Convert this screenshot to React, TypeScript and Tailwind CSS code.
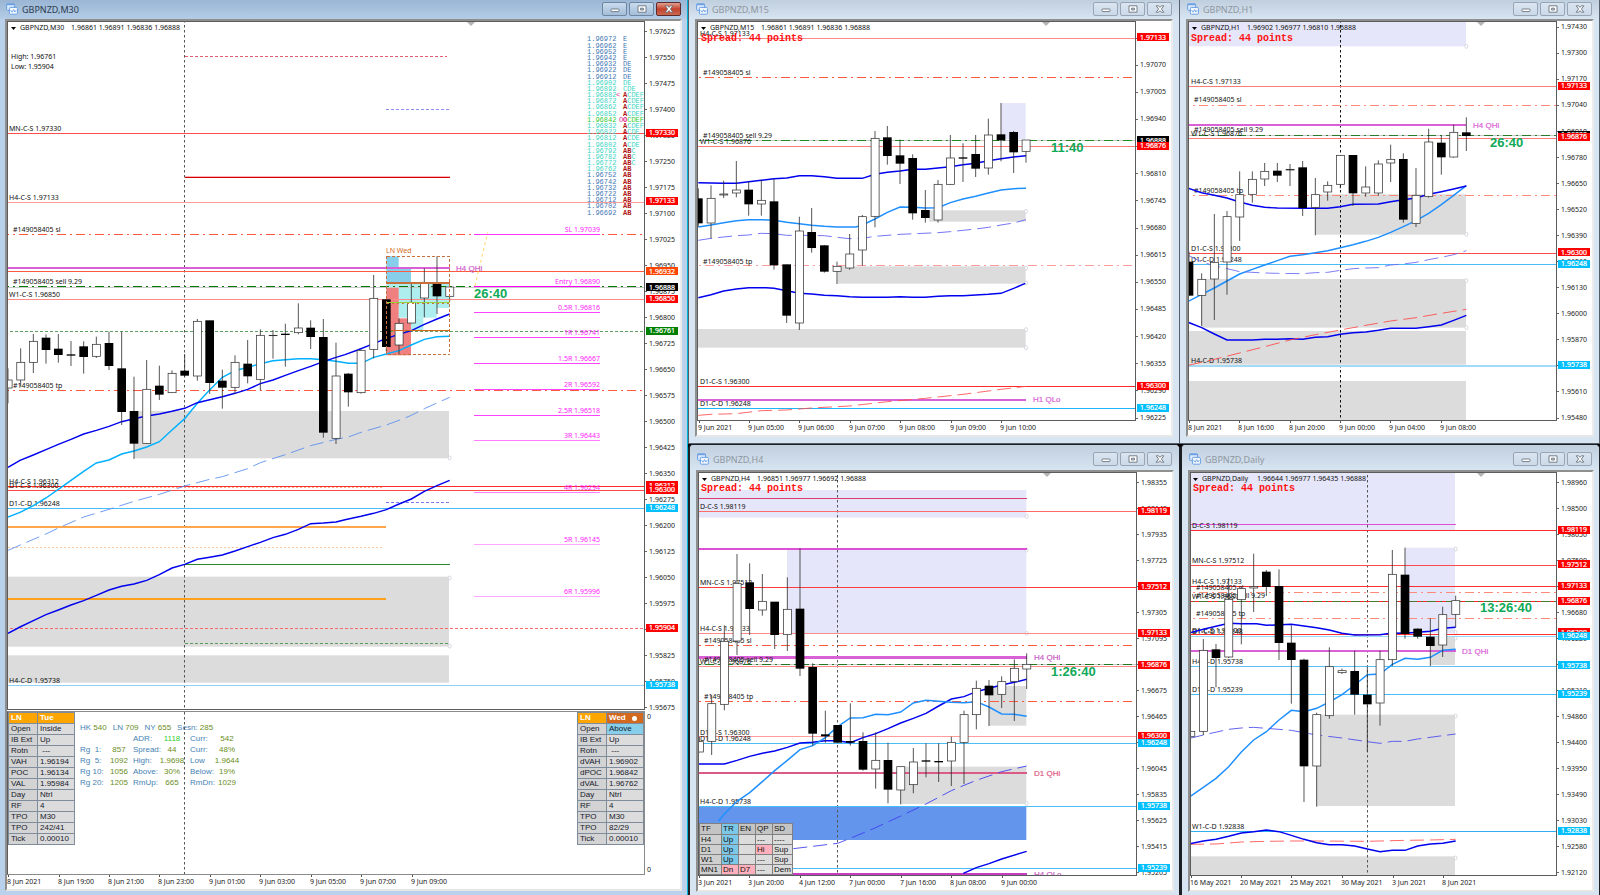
import React from "react";

const px = (v: number) => Math.round(v / 3);
const mid = (v: number) => Math.round(v / 3 + 2.4);

type Candle = [x: number, high: number, low: number, top: number, bottom: number, bear: 0 | 1];
type Line = { y: number; c: string; x1?: number; x2?: number; w?: number; dash?: "dd" | "d" | "dot" };
type Box = [x1: number, y1: number, x2: number, y2: number, fill: string];
type Curve = { c: string; p: string; w?: number; dash?: string };
type Label = { x: number; y: number; t: string; c?: string; k?: "time" | "mark" | "spread" };
type Badge = [y: number, text: string, fill: string];

type ChartData = {
  ox: number;
  oy: number;
  symbol: string;
  titleX: number;
  titleY: number;
  ohlcX: number;
  ohlc: string;
  shiftX: number;
  boxes: Box[];
  candles: Candle[];
  lines: Line[];
  curves: Curve[];
  labels: Label[];
  marks: Label[];
  handles?: [number, number][];
  separator?: number;
  separatorColor?: string;
  prices: [y: number, text: string][];
  badges: Badge[];
  times: [x: number, text: string][];
};

const RED = "#ff0000";
const SKY = "#00bfff";
const BLUE = "#0000ee";
const DODGER = "#1e8fff";
const GREY = "#dcdcdc";
const LAV = "#e6e6fa";
const ORCHID = "#da60d6";
const TOMATO = "#ff5a40";
const DD_RED = "#ff8a7a";

const DASHES = { dd: "9 4 2 4", d: "3 2", dot: "2 2" };

const scale = (first: number, step: number, y0: number, dy: number, n: number): [number, string][] =>
  Array.from({ length: n }, (_, i) => [y0 + dy * i, ((first - step * i) / 100000).toFixed(5)]);

const NOTO = "font-['Noto_Sans',sans-serif]";
const SANS = "font-['Liberation_Sans',Arial,sans-serif]";
const MONO = "font-['Liberation_Mono',monospace]";

/* ---------- chart data ---------- */

const rungs: [number, string, string][] = [
  [703, "SL 1.97039", "#ff33ff"],
  [859, "Entry 1.96890", "#ff00ff"],
  [937, "0.5R 1.96816", "#ff44ff"],
  [1012, "1R 1.96741", "#ff44ff"],
  [1090, "1.5R 1.96667", "#ff44ff"],
  [1168, "2R 1.96592", "#ff44ff"],
  [1246, "2.5R 1.96518", "#ff44ff"],
  [1321, "3R 1.96443", "#ff7dff"],
  [1477, "4R 1.96294", "#ff7dff"],
  [1632, "5R 1.96145", "#ffa6ff"],
  [1788, "6R 1.95996", "#ffa6ff"],
];

const m30: ChartData = {
  ox: 24, oy: 66, symbol: "GBPNZD,M30", titleX: 60, titleY: 84, ohlcX: 213,
  ohlc: "1.96861 1.96891 1.96836 1.96888", shiftX: 1414,
  boxes: [
    [402, 1233, 1347, 1375, GREY], [22, 1730, 1347, 1940, GREY], [22, 1966, 1347, 2048, GREY],
    [1159, 769, 1196, 808, "#87ceeb"], [1159, 806, 1233, 847, "#87ceeb"],
    [1159, 847, 1348, 924, "#afeeee"], [1196, 924, 1310, 953, "#afeeee"], [1233, 953, 1270, 990, "#afeeee"],
    [1159, 862, 1196, 957, "#f08080"], [1159, 955, 1233, 1066, "#f08080"],
  ],
  candles: [
    [24, 1105, 1210, 1140, 1165, 0], [62, 1045, 1160, 1087, 1141, 0], [100, 1002, 1119, 1024, 1088, 0],
    [138, 1003, 1091, 1014, 1050, 1], [175, 1002, 1088, 1047, 1065, 1], [213, 1023, 1098, 1064, 1067, 1],
    [251, 1024, 1121, 1040, 1071, 1], [289, 1010, 1074, 1033, 1070, 0], [327, 995, 1110, 1030, 1098, 1],
    [365, 995, 1275, 1106, 1236, 1], [402, 1130, 1377, 1234, 1331, 1], [440, 1080, 1331, 1168, 1331, 0],
    [478, 1097, 1200, 1158, 1184, 1], [516, 1111, 1179, 1120, 1179, 0], [554, 1062, 1131, 1113, 1127, 1],
    [592, 957, 1142, 964, 1129, 0], [629, 962, 1182, 962, 1149, 1], [667, 1109, 1226, 1143, 1163, 1],
    [705, 1066, 1182, 1087, 1163, 0], [743, 1020, 1150, 1092, 1129, 1], [781, 988, 1171, 1006, 1139, 0],
    [819, 990, 1076, 1006, 1008, 0], [856, 971, 1100, 1002, 1005, 1], [895, 910, 1003, 984, 999, 0],
    [932, 961, 1047, 984, 1011, 1], [970, 957, 1313, 1012, 1298, 1], [1008, 1028, 1332, 1128, 1316, 0],
    [1045, 1119, 1220, 1122, 1177, 1], [1083, 1048, 1181, 1051, 1179, 0], [1121, 825, 1075, 895, 1049, 0],
    [1159, 899, 1055, 899, 1041, 1], [1197, 955, 1065, 970, 1036, 0], [1234, 846, 970, 907, 970, 0],
    [1273, 805, 952, 847, 895, 0], [1311, 769, 942, 847, 889, 1], [1349, 861, 905, 861, 890, 0],
  ],
  lines: [
    { y: 170, c: "#e06070", x1: 554, x2: 1341, dash: "d" },
    { y: 327, c: "#8c8cf5", x1: 1159, x2: 1349, dash: "d" },
    { y: 400, c: "#ff4d4d" },
    { y: 529, c: "#ffb0b0", x1: 554, x2: 1349 },
    { y: 532, c: "#cc0000", x1: 554, x2: 1349 },
    { y: 606, c: "#ff9c9c" },
    { y: 703, c: TOMATO, dash: "dd" },
    { y: 804, c: ORCHID, x2: 1349, w: 2 },
    { y: 814, c: TOMATO },
    { y: 862, c: "#c8c8c8" },
    { y: 859, c: "#007a00", dash: "dd" },
    { y: 898, c: "#ff8a8a" },
    { y: 994, c: "#5f9f5f", dash: "d" },
    { y: 1171, c: TOMATO, dash: "dd" },
    { y: 1459, c: "#ff2a2a" },
    { y: 1462, c: "#ffb080", x2: 1152, dash: "dot" },
    { y: 1471, c: "#ff4a4a" },
    { y: 1525, c: "#48bdf8" },
    { y: 1581, c: "#ffa64d", x2: 1159, w: 2 },
    { y: 1643, c: "#ffc9a0", x2: 1152, dash: "dot" },
    { y: 1694, c: "#2a8a2a", x1: 554, x2: 1349 },
    { y: 1798, c: "#ffa01a", x2: 1159, w: 2 },
    { y: 1885, c: "#f56a6a", dash: "d" },
    { y: 1930, c: "#5a9a5a", x1: 554, x2: 1343, dash: "d" },
    { y: 2056, c: "#8fd0f8" },
    { y: 1507, c: "#7a7af0", x1: 1159, x2: 1349, dash: "d" },
    ...rungs.map(([y, , c]) => ({ y, c, x1: 1423, x2: 1799 })),
  ],
  curves: [
    { c: "#00b0ff", p: "24,1551 60,1537 100,1517 138,1494 175,1468 213,1441 251,1414 289,1389 327,1380 365,1362 402,1353 440,1341 478,1325 516,1290 554,1256 592,1210 629,1170 667,1132 705,1112 743,1102 781,1091 819,1082 856,1079 895,1076 932,1076 970,1079 1008,1084 1045,1090 1083,1090 1121,1072 1159,1062 1197,1052 1234,1035 1273,1018 1311,1010 1349,1009" },
    { c: BLUE, p: "24,1402 60,1381 100,1365 138,1349 175,1333 213,1318 251,1302 289,1291 327,1279 365,1265 402,1256 440,1248 478,1242 516,1234 554,1225 592,1208 629,1199 667,1190 705,1180 743,1168 781,1151 819,1140 856,1126 895,1112 932,1099 970,1085 1008,1072 1035,1064 1073,1050 1121,1031 1159,1015 1197,1003 1234,992 1273,973 1311,957 1349,942" },
    { c: "#5a8df0", w: 1, dash: "14 6", p: "24,1651 100,1618 138,1602 175,1584 251,1551 327,1528 402,1504 478,1483 554,1458 629,1438 667,1430 743,1406 781,1388 856,1364 932,1337 1008,1318 1045,1311 1083,1297 1159,1275 1197,1261 1234,1246 1273,1226 1311,1209 1349,1192" },
    { c: BLUE, p: "24,1900 60,1881 100,1862 138,1844 175,1830 213,1815 251,1802 289,1786 327,1770 365,1759 402,1752 440,1741 478,1724 516,1704 554,1693 592,1678 629,1672 667,1665 705,1653 743,1640 781,1627 819,1613 856,1603 895,1588 932,1571 970,1569 1008,1566 1035,1559 1083,1549 1121,1540 1159,1529 1197,1512 1234,1497 1273,1474 1311,1457 1349,1441" },
    { c: "#ffd24a", w: 1, dash: "3 3", p: "1425,858 1463,697" },
  ],
  labels: [
    { x: 34, y: 171, t: "High: 1.96761" }, { x: 33, y: 200, t: "Low: 1.95904" },
    { x: 28, y: 386, t: "MN-C-S 1.97330" }, { x: 28, y: 592, t: "H4-C-S 1.97133" },
    { x: 39, y: 689, t: "#149058405 sl" }, { x: 39, y: 845, t: "#149058405 sell 9.29" },
    { x: 28, y: 885, t: "W1-C-S 1.96850" }, { x: 39, y: 1157, t: "#149058405 tp" },
    { x: 28, y: 1445, t: "H4-C-S 1.96312" }, { x: 28, y: 1458, t: "D1-C-S 1.96300" },
    { x: 28, y: 1511, t: "D1-C-D 1.96248" }, { x: 28, y: 2043, t: "H4-C-D 1.95738" },
  ],
  marks: [
    { x: 1158, y: 751, t: "LN Wed", c: "#d2691e" },
    { x: 1368, y: 804, t: "H4 QHi", c: "#d060cc", k: "mark" },
    { x: 1424, y: 882, t: "26:40", k: "time" },
  ],
  handles: [[1349, 1374], [1349, 1734], [1349, 1938]],
  separator: 554,
  prices: scale(197625, 75, 94, 78, 27),
  badges: [
    [399, "1.97330", RED], [603, "1.97133", RED], [814, "1.96932", "#ff4500"], [896, "1.96850", RED],
    [862, "1.96888", "#000000"], [992, "1.96761", "#008000"], [1456, "1.96312", RED], [1470, "1.96300", RED],
    [1524, "1.96248", SKY], [1883, "1.95904", RED], [2055, "1.95738", SKY],
  ],
  times: [[24, "8 Jun 2021"], [176, "8 Jun 19:00"], [327, "8 Jun 21:00"], [478, "8 Jun 23:00"], [630, "9 Jun 01:00"], [781, "9 Jun 03:00"], [933, "9 Jun 05:00"], [1084, "9 Jun 07:00"], [1235, "9 Jun 09:00"]],
};

const m15: ChartData = {
  ox: 36, oy: 66, symbol: "GBPNZD,M15", titleX: 72, titleY: 84, ohlcX: 226,
  ohlc: "1.96861 1.96891 1.96836 1.96888", shiftX: 1081,
  boxes: [
    [945, 309, 1019, 418, LAV], [730, 631, 1019, 665, GREY], [455, 799, 1019, 851, GREY], [36, 987, 1019, 1043, GREY],
  ],
  candles: [
    [37, 565, 680, 596, 670, 1], [75, 556, 715, 595, 670, 0], [113, 542, 594, 582, 586, 0], [151, 483, 592, 570, 580, 0],
    [188, 545, 647, 570, 613, 1], [226, 540, 647, 601, 613, 0], [264, 536, 809, 605, 796, 1], [302, 794, 969, 794, 947, 1],
    [340, 650, 990, 693, 970, 0], [377, 624, 758, 697, 744, 1], [415, 735, 818, 737, 815, 1], [453, 785, 852, 799, 815, 0],
    [491, 702, 809, 762, 805, 0], [529, 645, 797, 650, 751, 0], [567, 393, 682, 415, 650, 0], [604, 378, 494, 413, 468, 1],
    [642, 419, 552, 467, 491, 1], [680, 463, 659, 475, 640, 1], [718, 570, 668, 631, 654, 1], [756, 540, 668, 553, 661, 0],
    [793, 405, 555, 474, 554, 0], [831, 430, 546, 473, 476, 1], [869, 405, 531, 463, 506, 1], [907, 356, 524, 405, 505, 0],
    [945, 309, 484, 404, 421, 1], [983, 393, 519, 397, 457, 1], [1020, 420, 488, 420, 455, 0],
  ],
  lines: [
    { y: 115, c: "#ff8a8a" }, { y: 232, c: TOMATO, dash: "dd" }, { y: 421, c: "#c8c8c8" },
    { y: 421, c: "#1f8a1f", dash: "dd" }, { y: 438, c: "#ff7a7a" }, { y: 797, c: "#ff9d9d", dash: "dd" },
    { y: 1159, c: "#ff2a2a" }, { y: 1200, c: ORCHID, x2: 1020, w: 2 }, { y: 1225, c: "#1fb4fa" },
  ],
  curves: [
    { c: BLUE, p: "37,548 113,550 151,550 226,541 264,536 302,534 340,527 377,527 415,530 453,535 529,535 567,523 604,517 642,513 680,508 718,508 756,504 793,500 831,494 869,490 907,482 945,476 983,471 1020,467" },
    { c: DODGER, p: "37,681 75,675 113,668 151,662 188,659 226,659 264,661 302,667 340,671 377,676 415,679 453,681 510,681 529,675 567,657 604,637 642,621 680,622 718,624 756,623 793,608 831,597 869,589 907,579 945,570 983,566 1020,565" },
    { c: "#5f5ff5", w: 1, dash: "14 6", p: "37,721 75,715 113,711 151,707 188,705 226,700 264,701 302,706 340,706 415,707 453,712 491,716 529,715 567,709 642,703 756,698 793,695 869,687 907,682 945,675 983,669 1020,659" },
    { c: BLUE, p: "37,893 75,884 113,873 151,867 188,863 240,863 264,865 302,872 340,880 377,882 415,886 453,887 491,890 529,892 604,892 642,890 680,892 718,892 756,889 793,887 831,887 869,885 907,883 945,880 983,865 1018,850" },
    { c: "#ff5050", w: 1, dash: "14 6", p: "37,1246 75,1243 151,1241 226,1232 302,1230 377,1224 491,1218 604,1205 718,1195 831,1183 945,1168 1020,1159" },
  ],
  labels: [
    { x: 41, y: 101, t: "H4-C-S 1.97133" }, { x: 52, y: 219, t: "#149058405 sl" }, { x: 52, y: 407, t: "#149058405 sell 9.29" },
    { x: 41, y: 425, t: "W1-C-S 1.96876" }, { x: 52, y: 785, t: "#149058405 tp" }, { x: 41, y: 1145, t: "D1-C-S 1.96300" },
    { x: 41, y: 1211, t: "D1-C-D 1.96248" }, { x: 44, y: 113, t: "Spread: 44 points", k: "spread" },
  ],
  marks: [{ x: 1041, y: 1198, t: "H1 QLo", c: ORCHID, k: "mark" }, { x: 1098, y: 443, t: "11:40", k: "time" }],
  handles: [[1020, 634], [1020, 804], [1020, 849], [1020, 989], [1020, 1043]],
  prices: scale(197135, 65, 113, 81.4, 15),
  badges: [[112, "1.97133", RED], [421, "1.96888", "#000000"], [437, "1.96876", RED], [1157, "1.96300", RED], [1224, "1.96248", SKY]],
  times: [[38, "9 Jun 2021"], [188, "9 Jun 05:00"], [340, "9 Jun 06:00"], [491, "9 Jun 07:00"], [643, "9 Jun 08:00"], [794, "9 Jun 09:00"], [945, "9 Jun 10:00"]],
};

const h1: ChartData = {
  ox: 27, oy: 66, symbol: "GBPNZD,H1", titleX: 62, titleY: 84, ohlcX: 202,
  ohlc: "1.96902 1.96977 1.96810 1.96888", shiftX: 904,
  boxes: [
    [25, 66, 858, 139, LAV], [406, 583, 858, 704, GREY], [65, 837, 858, 983, GREY], [25, 993, 858, 1094, GREY], [25, 1143, 858, 1262, GREY],
  ],
  candles: [
    [27, 755, 887, 786, 887, 1], [65, 820, 978, 838, 887, 0], [103, 642, 960, 787, 838, 0], [141, 633, 884, 650, 787, 0],
    [179, 514, 723, 584, 652, 0], [217, 514, 608, 538, 584, 0], [254, 489, 558, 514, 538, 0], [292, 489, 546, 513, 527, 1],
    [330, 492, 558, 508, 511, 0], [368, 483, 648, 503, 624, 1], [406, 534, 706, 584, 623, 0], [443, 544, 602, 556, 577, 0],
    [481, 466, 565, 466, 554, 0], [519, 466, 618, 466, 580, 1], [557, 499, 590, 561, 580, 0], [595, 481, 587, 492, 580, 0],
    [632, 434, 546, 478, 490, 0], [670, 460, 668, 478, 659, 1], [708, 504, 681, 586, 671, 0], [746, 386, 593, 426, 590, 0],
    [784, 406, 524, 429, 472, 1], [821, 374, 473, 397, 472, 0], [859, 352, 453, 398, 408, 1],
  ],
  lines: [
    { y: 259, c: "#ff7a7a" }, { y: 316, c: DD_RED, dash: "dd" }, { y: 375, c: ORCHID, x2: 859, w: 2 },
    { y: 406, c: "#c8c8c8" }, { y: 406, c: "#2c7a2c", dash: "dd" }, { y: 415, c: "#ff7a7a" },
    { y: 586, c: DD_RED, dash: "dd" }, { y: 760, c: "#ff4a4a" }, { y: 793, c: "#48bdf8" }, { y: 1097, c: "#a4daf8", w: 2 },
  ],
  curves: [
    { c: DODGER, p: "25,904 65,883 103,864 141,843 179,822 217,808 254,795 292,782 330,769 368,764 406,758 443,752 481,743 519,734 557,724 595,712 632,697 670,680 708,662 746,640 784,614 821,586 859,557" },
    { c: BLUE, p: "25,565 65,578 103,586 141,594 179,606 217,616 254,622 292,624 368,625 443,625 481,620 519,613 595,612 632,605 670,599 708,594 746,583 784,575 821,567 859,558" },
    { c: "#6a6af5", w: 1, dash: "14 6", p: "25,766 65,786 103,797 141,806 179,815 254,819 292,820 368,821 406,818 443,817 481,811 519,806 557,804 595,803 632,795 670,792 708,787 746,779 784,772 821,764 859,752" },
    { c: BLUE, p: "25,967 65,983 103,1002 141,1020 217,1020 254,1018 292,1018 330,1016 368,1018 406,1012 443,1010 481,1003 519,998 557,996 595,991 632,985 708,985 746,980 784,975 821,961 859,946" },
    { c: "#ff4a4a", w: 1, dash: "14 6", p: "25,1096 103,1078 179,1059 254,1040 330,1020 406,1004 481,990 557,976 632,963 708,953 784,940 859,928" },
  ],
  labels: [
    { x: 32, y: 244, t: "H4-C-S 1.97133" }, { x: 42, y: 300, t: "#149058405 sl" }, { x: 42, y: 390, t: "#149058405 sell 9.29" },
    { x: 32, y: 400, t: "W1-C-S 1.96876" }, { x: 42, y: 573, t: "#149058405 tp" }, { x: 32, y: 746, t: "D1-C-S 1.96300" },
    { x: 32, y: 779, t: "D1-C-D 1.96248" }, { x: 32, y: 1083, t: "H4-C-D 1.95738" }, { x: 34, y: 113, t: "Spread: 44 points", k: "spread" },
  ],
  marks: [{ x: 880, y: 374, t: "H4 QHi", c: ORCHID, k: "mark" }, { x: 934, y: 430, t: "26:40", k: "time" }],
  handles: [[859, 139], [859, 703], [859, 842], [859, 983]],
  separator: 481, separatorColor: "#111111",
  prices: scale(197430, 130, 81, 78.1, 16),
  badges: [[257, "1.97133", RED], [404, "1.96888", "#000000"], [411, "1.96876", RED], [757, "1.96300", RED], [791, "1.96248", SKY], [1095, "1.95738", SKY]],
  times: [[28, "8 Jun 2021"], [178, "8 Jun 16:00"], [329, "8 Jun 20:00"], [481, "9 Jun 00:00"], [631, "9 Jun 04:00"], [784, "9 Jun 08:00"]],
};

const h4: ChartData = {
  ox: 39, oy: 99, symbol: "GBPNZD,H4", titleX: 74, titleY: 116, ohlcX: 214,
  ohlc: "1.96851 1.96977 1.96692 1.96888", shiftX: 1084,
  boxes: [
    [38, 150, 1021, 233, LAV], [303, 327, 1021, 581, LAV], [909, 738, 1021, 857, GREY], [645, 980, 1021, 1092, GREY], [38, 1100, 1021, 1200, "#6495ed"],
  ],
  candles: [
    [40, 890, 937, 905, 937, 0], [77, 765, 945, 791, 905, 0], [115, 556, 811, 604, 794, 0], [153, 342, 645, 430, 604, 0],
    [191, 370, 585, 428, 507, 1], [229, 402, 527, 484, 511, 0], [266, 486, 627, 486, 585, 1], [304, 412, 633, 508, 584, 0],
    [342, 325, 708, 507, 686, 1], [380, 670, 917, 682, 881, 1], [418, 812, 908, 884, 889, 1], [455, 856, 908, 856, 908, 1],
    [493, 790, 917, 904, 908, 1], [531, 877, 992, 904, 989, 1], [569, 877, 1046, 961, 988, 0], [606, 908, 1090, 961, 1049, 1],
    [644, 980, 1093, 980, 1051, 0], [682, 924, 1060, 966, 1035, 0], [720, 910, 1012, 962, 965, 1], [758, 910, 1026, 964, 967, 1],
    [796, 890, 1038, 907, 964, 0], [834, 812, 1032, 824, 908, 0], [871, 722, 868, 745, 825, 0], [909, 720, 858, 738, 766, 1],
    [947, 709, 804, 725, 764, 0], [985, 658, 843, 685, 725, 0], [1022, 640, 747, 673, 688, 0],
  ],
  lines: [
    { y: 176, c: "#dc3c6c", x2: 1023 }, { y: 214, c: "#ff6a6a" }, { y: 327, c: "#dd50d6", x2: 1022, w: 2 }, { y: 442, c: "#ff3c3c" },
    { y: 580, c: "#ff8a8a" }, { y: 616, c: TOMATO, dash: "dd" }, { y: 652, c: ORCHID, x2: 1023, w: 3 }, { y: 673, c: "#c8c8c8" },
    { y: 673, c: "#1f7a1f", dash: "dd" }, { y: 679, c: "#ff8a8a" }, { y: 785, c: TOMATO, dash: "dd" }, { y: 890, c: "#ff9c9c" },
    { y: 910, c: "#48bdf8" }, { y: 1000, c: "#db5a86", x2: 1023, w: 2 }, { y: 1099, c: "#48bdf8" }, { y: 1285, c: "#48bdf8" },
    { y: 1303, c: "#c83cc4", x1: 320, x2: 1023, w: 2 },
  ],
  curves: [
    { c: BLUE, p: "38,972 115,972 153,961 191,949 229,940 266,933 304,922 342,909 380,907 418,902 455,902 493,908 531,893 569,881 606,866 644,849 682,835 720,820 758,798 796,777 834,770 871,755 909,745 947,735 985,727 1022,718" },
    { c: DODGER, p: "98,1143 115,1122 153,1084 191,1058 229,1025 266,992 304,961 342,929 380,917 418,893 455,860 493,834 531,833 569,823 606,824 644,816 682,789 720,781 758,784 796,787 834,788 871,785 909,801 947,822 985,823 1022,829" },
    { c: "#3c3cf0", w: 1, dash: "14 6", p: "322,1226 380,1219 455,1210 493,1195 569,1163 644,1128 720,1092 796,1052 834,1036 871,1021 909,1008 947,995 1022,978" },
    { c: BLUE, p: "832,1300 871,1283 909,1271 947,1257 1022,1234" },
  ],
  labels: [
    { x: 43, y: 201, t: "D-C-S 1.98119" }, { x: 43, y: 428, t: "MN-C-S 1.97512" }, { x: 43, y: 567, t: "H4-C-S 1.97133" },
    { x: 54, y: 603, t: "#149058405 sl" }, { x: 54, y: 660, t: "#149058405 sell 9.29" }, { x: 43, y: 665, t: "W1-C-S 1.96876" },
    { x: 54, y: 771, t: "#149058405 tp" }, { x: 43, y: 877, t: "D1-C-S 1.96300" }, { x: 43, y: 896, t: "D1-C-D 1.96248" },
    { x: 43, y: 1085, t: "H4-C-D 1.95738" }, { x: 46, y: 145, t: "Spread: 44 points", k: "spread" },
  ],
  marks: [
    { x: 1043, y: 651, t: "H4 QHi", c: "#c85ac4", k: "mark" }, { x: 1043, y: 999, t: "D1 QHi", c: "#dc5a86", k: "mark" },
    { x: 1043, y: 1301, t: "H4 QLo", c: "#c85ac4", k: "mark" }, { x: 1099, y: 695, t: "1:26:40", k: "time" },
  ],
  handles: [[1022, 229], [1022, 330], [1022, 580], [1022, 1090]],
  separator: 455,
  prices: scale(198355, 210, 127, 78, 16),
  badges: [[213, "1.98119", RED], [439, "1.97512", RED], [578, "1.97133", RED], [675, "1.96876", RED], [887, "1.96300", RED], [908, "1.96248", SKY], [1097, "1.95738", SKY], [1283, "1.95239", SKY]],
  times: [[40, "3 Jun 2021"], [190, "3 Jun 20:00"], [342, "4 Jun 12:00"], [493, "7 Jun 00:00"], [644, "7 Jun 16:00"], [796, "8 Jun 08:00"], [947, "9 Jun 00:00"]],
};

const d1: ChartData = {
  ox: 33, oy: 99, symbol: "GBPNZD,Daily", titleX: 66, titleY: 116, ohlcX: 230,
  ohlc: "1.96644 1.96977 1.96435 1.96888", shiftX: 904,
  boxes: [
    [30, 98, 825, 271, LAV], [675, 323, 825, 580, LAV], [751, 591, 825, 675, GREY], [410, 824, 825, 1098, GREY], [30, 1249, 825, 1308, GREY],
  ],
  candles: [
    [32, 872, 892, 874, 890, 0], [70, 597, 885, 631, 875, 0], [108, 612, 742, 629, 654, 1], [146, 415, 654, 478, 652, 0],
    [184, 440, 613, 446, 480, 0], [221, 341, 516, 440, 445, 0], [259, 390, 468, 396, 441, 1], [297, 388, 660, 439, 609, 1],
    [334, 556, 791, 609, 660, 1], [372, 656, 1086, 660, 979, 1], [410, 818, 1100, 824, 979, 0], [448, 622, 836, 680, 828, 0],
    [486, 686, 702, 692, 699, 0], [524, 632, 824, 694, 764, 1], [562, 680, 935, 765, 793, 1], [600, 632, 857, 659, 790, 0],
    [637, 330, 678, 403, 660, 0], [675, 323, 596, 405, 582, 1], [713, 565, 596, 567, 590, 1], [751, 535, 678, 591, 618, 1],
    [788, 500, 651, 524, 616, 0], [827, 467, 562, 482, 524, 0],
  ],
  lines: [
    { y: 254, c: "#dd50d6", x2: 827 }, { y: 271, c: "#ff2a2a" }, { y: 376, c: "#ff4a4a" }, { y: 439, c: "#ff3030" },
    { y: 457, c: DD_RED, dash: "dd" }, { y: 484, c: "#ff2a2a" }, { y: 483, c: "#4a7a30", dash: "dd" }, { y: 534, c: DD_RED, dash: "dd" },
    { y: 583, c: "#ff3030" }, { y: 590, c: "#9cd8fa" }, { y: 633, c: ORCHID, x2: 827, w: 2 }, { y: 679, c: "#58c0f4" },
    { y: 763, c: "#48bdf8" }, { y: 1174, c: "#30aef0" },
  ],
  curves: [
    { c: BLUE, p: "30,578 70,568 108,559 146,550 184,551 230,551 259,556 334,553 372,558 410,563 448,570 486,580 524,585 600,584 637,579 675,580 713,577 751,574 788,565 827,562" },
    { c: DODGER, p: "30,1070 70,1042 108,1015 146,980 184,936 221,900 259,875 297,840 334,811 372,815 410,805 448,786 486,764 524,735 562,704 600,702 637,673 675,655 713,658 751,652 788,631 827,628" },
    { c: "#4a4af0", w: 1, dash: "14 6", p: "30,895 70,885 146,868 184,864 221,862 259,865 334,871 372,878 410,885 486,894 562,905 600,910 637,904 675,904 713,897 788,887 827,882" },
    { c: "#ff5050", w: 1, dash: "14 6", p: "30,1213 108,1212 184,1206 259,1204 334,1203 410,1203 562,1204 675,1201 751,1200 827,1198" },
    { c: BLUE, p: "30,1211 70,1203 108,1198 146,1189 184,1179 221,1175 259,1170 297,1175 334,1186 372,1198 410,1208 448,1214 486,1214 524,1218 562,1227 600,1235 637,1231 675,1231 713,1218 751,1212 788,1210 827,1203" },
  ],
  labels: [
    { x: 36, y: 258, t: "D-C-S 1.98119" }, { x: 36, y: 362, t: "MN-C-S 1.97512" }, { x: 36, y: 425, t: "H4-C-S 1.97133" },
    { x: 47, y: 443, t: "#149058405 sl" }, { x: 47, y: 468, t: "#149058405 sell 9.29" }, { x: 36, y: 469, t: "W1-C-S 1.96876" },
    { x: 47, y: 521, t: "#149058405 tp" }, { x: 36, y: 572, t: "D1-C-S 1.96300" }, { x: 36, y: 576, t: "D1-C-D 1.96248" },
    { x: 36, y: 664, t: "H4-C-D 1.95738" }, { x: 36, y: 749, t: "D1-C-D 1.95239" }, { x: 36, y: 1160, t: "W1-C-D 1.92838" },
    { x: 38, y: 145, t: "Spread: 44 points", k: "spread" },
  ],
  marks: [{ x: 847, y: 632, t: "D1 QHi", c: ORCHID, k: "mark" }, { x: 902, y: 504, t: "13:26:40", k: "time" }],
  handles: [[827, 327], [827, 577], [827, 594], [827, 828], [827, 1254]],
  separator: 562,
  prices: [
    [127, "1.98960"], [205, "1.98500"], [283, "1.98050"], [361, "1.97590"], [439, "1.97140"], [517, "1.96680"], [595, "1.96220"], [673, "1.95770"],
    [751, "1.95310"], [829, "1.94860"], [907, "1.94400"], [985, "1.93950"], [1063, "1.93490"], [1141, "1.93030"], [1219, "1.92580"], [1297, "1.92120"],
  ],
  badges: [[270, "1.98119", RED], [373, "1.97512", RED], [438, "1.97133", RED], [483, "1.96876", RED], [577, "1.96300", RED], [588, "1.96248", SKY], [676, "1.95738", SKY], [761, "1.95239", SKY], [1172, "1.92838", SKY]],
  times: [[32, "16 May 2021"], [183, "20 May 2021"], [334, "25 May 2021"], [486, "30 May 2021"], [638, "3 Jun 2021"], [788, "8 Jun 2021"]],
};

/* ---------- chart drawing ---------- */

function ChartText({ l }: { l: Label }) {
  if (l.k === "time")
    return (
      <text x={px(l.x) - 1} y={px(l.y) + 4} className={`${SANS} text-[13px] font-bold`} fill="#0fa958">{l.t}</text>
    );
  if (l.k === "mark")
    return (
      <text x={px(l.x)} y={px(l.y) + 3} className={`${SANS} text-[8px]`} fill={l.c} stroke={l.c} strokeWidth="0.2">{l.t}</text>
    );
  if (l.k === "spread")
    return (
      <text x={px(l.x)} y={px(l.y) + 3} className={`${MONO} text-[10px] font-bold`} fill="#ff1010">{l.t}</text>
    );
  return (
    <text x={px(l.x)} y={mid(l.y)} className={`${NOTO} text-[7px]`} fill={l.c ?? "#111111"}>{l.t}</text>
  );
}

function Profile() {
  const letters = ["E", "E", "E", "E", "DE", "DE", "DE", "DE", "CDE", "ACDEF", "ACDEF", "ACDEF", "ACDEF", "OCDEF", "ACDEF", "ACDE", "ACDE", "ACDE", "ABC", "ABC", "ABC", "AB", "AB", "AB", "AB", "AB", "AB", "AB", "AB"];
  return (
    <g className={`${MONO} text-[7px]`}>
      {letters.map((s, i) => {
        const value = i >= 7 && i <= 21;
        const tint = i === 13 ? "#32cd32" : value ? "#40d6c4" : "#3f78b4";
        const split = s.startsWith("AB") ? 2 : /^[AO]/.test(s) ? 1 : 0;
        const y = mid(117 + 18.55 * i);
        return (
          <g key={i}>
            <text x={587} y={y} fill={tint}>{((196972 - 10 * i) / 100000).toFixed(5)}</text>
            {i === 13 && <text x={619} y={y} fill="#e0218a">O</text>}
            {i === 9 && <text x={616} y={y} fill="#e0218a">&lt;</text>}
            <text x={623} y={y} fill={tint}>
              <tspan fill={i === 13 ? "#e0218a" : "#b01818"} fontWeight={split ? 700 : 400}>{s.slice(0, split)}</tspan>
              {s.slice(split)}
            </text>
          </g>
        );
      })}
    </g>
  );
}

function SessionBox() {
  return (
    <g shapeRendering="crispEdges" stroke="#c8703c" fill="none">
      <rect x={386.5} y={256.5} width={63} height={98} strokeDasharray="3 2" />
      <path d="M387 282.5H450" strokeWidth="2" />
      <path d="M391 330.5H450" stroke="#d2691e" />
      <path d="M387 302.5H450" stroke="#9ad03c" />
      <path d="M387 303.5H450" strokeDasharray="2 3" />
    </g>
  );
}

function Plot({ d, over }: { d: ChartData; over?: React.ReactNode }) {
  const sep = d.separator ? Math.floor(d.separator / 3) + 0.5 : 0;
  return (
    <svg className="block h-full w-full overflow-hidden" role="img" aria-label={`${d.symbol} price chart`}>
      <g transform={`translate(${-d.ox / 3} ${-d.oy / 3})`}>
        {d.boxes.map(([x1, y1, x2, y2, f], i) => (
          <rect key={i} x={x1 / 3} y={y1 / 3} width={(x2 - x1) / 3} height={(y2 - y1) / 3} fill={f} />
        ))}
        {d.handles?.map(([x, y], i) => (
          <ellipse key={i} cx={x / 3} cy={y / 3} rx={1.5} ry={2} fill="#fff" stroke="#c9c9d4" strokeWidth={0.7} />
        ))}
        {d.separator && (
          <line x1={sep} x2={sep} y1={0} y2="200%" stroke={d.separatorColor ?? "#555555"} strokeDasharray="2.5 2.5" />
        )}
        {d.lines.map((l, i) => (
          <line
            key={i}
            x1={l.x1 ? px(l.x1) : 0}
            x2={l.x2 ? px(l.x2) : "300%"}
            y1={l.w === 2 ? px(l.y) : Math.floor(l.y / 3) + 0.5}
            y2={l.w === 2 ? px(l.y) : Math.floor(l.y / 3) + 0.5}
            stroke={l.c}
            strokeWidth={l.w ?? 1}
            strokeDasharray={l.dash ? DASHES[l.dash] : undefined}
            shapeRendering="crispEdges"
          />
        ))}
        {d.labels.map((l, i) => <ChartText key={i} l={l} />)}
        <g transform="scale(0.333333)">
          {d.curves.map((c, i) => (
            <polyline
              key={i}
              points={c.p}
              fill="none"
              stroke={c.c}
              strokeWidth={c.w === 1 ? 2.6 : 4.4}
              strokeDasharray={c.dash?.split(" ").map((n) => Number(n) * 3).join(" ")}
            />
          ))}
          {d.candles.map(([x, hi, lo, t, b, bear], i) => (
            <g key={i}>
              <line x1={x} x2={x} y1={hi} y2={lo} stroke="#2a2a2a" strokeWidth={2.4} />
              <rect
                x={bear ? x - 13 : x - 11.7}
                y={bear ? t - 1 : t}
                width={bear ? 26 : 24}
                height={bear ? b - t + 1 : Math.max(b - t - 1, 1)}
                fill={bear ? "#000" : "#fff"}
                stroke={bear ? "none" : "#333"}
                strokeWidth={2.2}
              />
            </g>
          ))}
        </g>
        {d.marks.map((l, i) => <ChartText key={i} l={l} />)}
        {over}
        <path d={`M${px(d.shiftX) - 4} ${d.oy / 3}h8l-4 4z`} fill="#b4b4b4" />
        <path d={`M${px(d.titleX) - 9} ${px(d.titleY) - 1}h5l-2.5 3z`} fill="#000" />
        <text x={px(d.titleX)} y={mid(d.titleY)} className={`${NOTO} text-[7px]`} fill="#111">{d.symbol}</text>
        <text x={px(d.ohlcX)} y={mid(d.titleY)} className={`${NOTO} text-[7px]`} fill="#111">{d.ohlc}</text>
      </g>
    </svg>
  );
}

function PriceAxis({ d }: { d: ChartData }) {
  return (
    <svg className="block h-full w-full overflow-visible" role="img" aria-label={`${d.symbol} price scale`}>
      <g transform={`translate(0 ${-d.oy / 3 + 1})`} className={`${NOTO} text-[7px]`}>
        {d.prices.map(([y, t]) => (
          <g key={t}>
            <path d={`M0 ${px(y) + 0.5}h2`} stroke="#666" />
            <text x={4} y={mid(y)} fill="#222">{t}</text>
          </g>
        ))}
        {d.badges.map(([y, t, f]) => (
          <g key={t}>
            <rect x={1} y={px(y) - 4} width={32} height={8} fill={f} />
            <text x={4} y={mid(y)} fill="#fff" stroke="#fff" strokeWidth="0.2">{t}</text>
          </g>
        ))}
      </g>
    </svg>
  );
}

function TimeAxis({ d }: { d: ChartData }) {
  return (
    <svg className="block h-full w-full overflow-hidden" role="img" aria-label={`${d.symbol} time scale`}>
      <g transform={`translate(${-d.ox / 3 + 1} 0)`} className={`${NOTO} text-[7px]`}>
        {d.times.map(([x, t]) => (
          <g key={t}>
            <path d={`M${px(x) + 0.5} 0v2`} stroke="#555" />
            <text x={px(x) - 1} y={9} fill="#222">{t}</text>
          </g>
        ))}
      </g>
    </svg>
  );
}

/* ---------- window chrome ---------- */

function AppIcon() {
  return (
    <svg width="12" height="12" viewBox="0 0 12 12" aria-hidden="true">
      <rect x="0.6" y="1" width="8" height="6.4" rx="1" fill="#dbe9fb" stroke="#6b9fe4" />
      <rect x="0.6" y="0.6" width="8" height="1.6" fill="#6b9fe4" />
      <rect x="3.4" y="4.4" width="8" height="6.8" rx="1" fill="#f4f9ff" stroke="#6b9fe4" />
      <path d="M4.6 7.2l1.6 2 1.4-2.6 1.3 2.4 1.2-1.8" fill="none" stroke="#6b9fe4" strokeWidth="0.9" />
    </svg>
  );
}

function WinButton({ kind, active }: { kind: "Minimize" | "Restore" | "Close"; active: boolean }) {
  const red = kind === "Close" && active;
  return (
    <button
      type="button"
      aria-label={kind}
      className={`flex h-[14px] w-[25px] items-center justify-center rounded-[2px] border ${
        red
          ? "border-[#5e2a2a] bg-linear-to-b from-[#e0a090] via-[#c4402c] to-[#c86a50]"
          : active
            ? "border-[#6f86a0] bg-linear-to-b from-[#c9dbee] to-[#a4bdd8]"
            : "border-[#97a5b5] bg-linear-to-b from-[#dae5f0] to-[#cbd9e8]"
      }`}
    >
      <svg width="10" height="8" viewBox="0 0 10 8" aria-hidden="true" fill="#fff" stroke="#5b6470" strokeWidth="0.8">
        {kind === "Minimize" && <rect x="1" y="4" width="8" height="2.6" rx="0.6" />}
        {kind === "Restore" && <path fillRule="evenodd" d="M1 0.8h8v6.4h-8zM3.6 3.2v1.8h2.8v-1.8z" />}
        {kind === "Close" && <path d="M1.2 0.8h2.4L5 2.4 6.4 0.8h2.4L6.4 4l2.4 3.2H6.4L5 5.6 3.6 7.2H1.2L3.6 4z" />}
      </svg>
    </button>
  );
}

function ChartWindow({
  d, active = false, className, titleClass, sub, children, over,
}: {
  d: ChartData;
  active?: boolean;
  className: string;
  titleClass: string;
  sub?: React.ReactNode;
  children?: React.ReactNode;
  over?: React.ReactNode;
}) {
  return (
    <section aria-label={d.symbol} className={`flex min-h-0 min-w-0 flex-col ${className}`}>
      <header className={`flex shrink-0 items-center gap-1 ${titleClass}`}>
        <AppIcon />
        <h2 className={`${NOTO} flex-1 text-[9px] leading-none ${active ? "text-[#2c3c50]" : "text-[#8f979f]"}`}>{d.symbol}</h2>
        <div className="flex gap-0.5">
          <WinButton kind="Minimize" active={active} />
          <WinButton kind="Restore" active={active} />
          <WinButton kind="Close" active={active} />
        </div>
      </header>
      <div
        className={`grid min-h-0 flex-1 grid-cols-[minmax(0,1fr)_35px] border-2 border-t-[#8f8f8f] border-r-[#ececec] border-b-[#e6e6e6] border-l-[#8f8f8f] bg-white ${
          sub ? "grid-rows-[minmax(0,1fr)_165px_14px]" : "grid-rows-[minmax(0,1fr)_14px]"
        }`}
      >
        <div className="relative min-h-0 border border-[#5c5c5c]">
          <Plot d={d} over={over} />
          {children}
        </div>
        <PriceAxis d={d} />
        {sub}
        <div className="col-span-2 min-h-0">
          <TimeAxis d={d} />
        </div>
      </div>
    </section>
  );
}

/* ---------- data panels ---------- */

function SessionTable({ day, live, rows }: { day: string; live?: boolean; rows: [string, string][] }) {
  return (
    <table className={`${SANS} relative w-[67px] shrink-0 table-fixed border-collapse text-[8px] leading-none text-[#16202c]`}>
      <thead>
        <tr className="h-[11px] text-left font-bold text-white">
          <th scope="col" className="w-[29px] border border-[#7f8c9c] bg-[#ffa500] px-0.5 py-0">LN</th>
          <th scope="col" className={`border border-[#7f8c9c] px-0.5 py-0 ${live ? "bg-[#d2691e]" : "bg-[#ffa500]"}`}>
            <span className="flex items-center justify-between pr-1">
              {day}
              {live && <span className="size-[5px] rounded-full bg-white" />}
            </span>
          </th>
        </tr>
      </thead>
      <tbody>
        {rows.map(([k, v], i) => (
          <tr key={i} className="h-[11px]">
            <th scope="row" className="border border-[#7f8c9c] bg-[#d3d3d3] px-0.5 py-0 text-left font-normal whitespace-nowrap">{k}</th>
            <td className={`border border-[#7f8c9c] px-0.5 py-0 whitespace-pre ${v === "Above" ? "bg-[#87ceeb]" : "bg-[#dcdcdc]"}`}>{v}</td>
          </tr>
        ))}
      </tbody>
    </table>
  );
}

const tueRows: [string, string][] = [["Open", "Inside"], ["IB Ext", "Up"], ["Rotn", " ---"], ["VAH", "1.96194"], ["POC", "1.96134"], ["VAL", "1.95984"], ["Day", "Ntrl"], ["RF", "4"], ["TPO", "M30"], ["TPO", "242/41"], ["Tick", "0.00010"]];
const wedRows: [string, string][] = [["Open", "Above"], ["IB Ext", "Up"], ["Rotn", " ---"], ["dVAH", "1.96902"], ["dPOC", "1.96842"], ["dVAL", "1.96762"], ["Day", "Ntrl"], ["RF", "4"], ["TPO", "M30"], ["TPO", "82/29"], ["Tick", "0.00010"]];

const ranges = [
  ["", "", "ADR:", "1118", "Curr:", "542"],
  ["Rg  1:", "857", "Spread:", "44", "Curr:", "48%"],
  ["Rg  5:", "1092", "High:", "1.9698", "Low", "1.9644"],
  ["Rg 10:", "1056", "Above:", "30%", "Below:", "19%"],
  ["Rg 20:", "1205", "RmUp:", "665", "RmDn:", "1029"],
];

function RangeStats() {
  return (
    <div className={`${SANS} ml-[5px] pt-[10px] text-[8px] leading-[11px] text-[#6b8e23]`}>
      <p className="flex gap-[6px] whitespace-pre">
        {[["HK", "540"], ["LN", "709"], ["NY", "655"], ["Sesn:", "285"]].map(([k, v]) => (
          <span key={k}><span className="text-[#4682b4]">{k}</span>{" "}{v}</span>
        ))}
      </p>
      {ranges.map((r, i) => (
        <p key={i} className="grid grid-cols-[26px_26px_30px_20px_34px_22px] whitespace-pre">
          {r.map((t, j) =>
            j % 2 === 0 ? (
              <span key={j} className={`text-[#4682b4] ${j === 4 ? "pl-[8px]" : j === 2 ? "pl-px" : ""}`}>{t}</span>
            ) : (
              <span key={j} className={`flex justify-center ${t === "1118" ? "text-[#32cd32]" : ""}`}>{t}</span>
            ),
          )}
        </p>
      ))}
    </div>
  );
}

function SubPanel() {
  return (
    <>
      <div className="relative mt-px flex min-h-0 items-start border border-[#8a8a8a] border-l-[#5c5c5c]">
        <SessionTable day="Tue" rows={tueRows} />
        <RangeStats />
        <div className="flex-1" />
        <SessionTable day="Wed" live rows={wedRows} />
        <svg className="pointer-events-none absolute inset-0 h-full w-full" aria-hidden="true">
          <line x1="176.5" x2="176.5" y1="0" y2="100%" stroke="#555" strokeDasharray="2.5 2.5" />
        </svg>
      </div>
      <div className={`${NOTO} flex flex-col justify-between pt-[3px] pb-px pl-0.5 text-[7px] leading-[8px] text-[#222]`}>
        <span>0</span>
        <span>0</span>
      </div>
    </>
  );
}

function TrendTable() {
  const rows = [
    ["H4", "Up", "", "---", "----"],
    ["D1", "Up", "", "Hi", "Sup"],
    ["W1", "Up", "", "---", "Sup"],
    ["MN1", "Dn", "D7", "---", "Dem"],
  ];
  const tint = (t: string) =>
    t === "Up" ? "bg-[#7cc8e8]" : t === "Dn" || t === "D7" || t === "Hi" ? "bg-[#ffb0bc]" : "bg-[#dcdcdc]";
  return (
    <table className={`${SANS} absolute bottom-0 left-0 w-[94px] table-fixed border-collapse text-[8px] leading-none text-[#111]`}>
      <thead>
        <tr className="h-[11px]">
          {["TF", "TR", "EN", "QP", "SD"].map((t, i) => (
            <th
              key={t}
              scope="col"
              className={`border border-[#808080] px-px py-0 text-left font-normal ${i === 0 ? "w-[22px]" : i === 4 ? "w-[20px]" : ""} ${t === "TR" ? "bg-[#7cc8e8]" : "bg-[#c4c4c4]"}`}
            >
              {t}
            </th>
          ))}
        </tr>
      </thead>
      <tbody>
        {rows.map((r) => (
          <tr key={r[0]} className="h-[10px]">
            {r.map((t, i) => (
              <td key={i} className={`border border-[#808080] px-px py-0 ${i === 0 ? "bg-[#cfcfcf]" : tint(t)}`}>{t}</td>
            ))}
          </tr>
        ))}
      </tbody>
    </table>
  );
}

/* ---------- workspace ---------- */

const idle = "bg-[#d7e4f2]";
const idleBar = "bg-linear-to-b from-[#c0cfde] to-[#d7e4f2]";

export default function App() {
  return (
    <main className="grid h-screen min-h-[720px] grid-cols-[688fr_492fr_420fr] grid-rows-[444fr_451fr] overflow-hidden bg-black">
      <ChartWindow
        d={m30}
        active
        className="row-span-2 border-r border-[#00b4d8] bg-[#b9d1ea] pr-[5px] pb-1 pl-[5px]"
        titleClass="-mx-[5px] h-[19px] bg-linear-to-b from-[#9ab6d4] to-[#b4cce6] pl-[6px] pr-[6px] pb-px"
        sub={<SubPanel />}
        over={
          <>
            <Profile />
            <SessionBox />
            {rungs.map(([y, t]) => (
              <text key={t} x={600} y={px(y) - 2} textAnchor="end" className={`${NOTO} text-[7px]`} fill="#ff22ff">{t}</text>
            ))}
          </>
        }
      />
      <ChartWindow
        d={m15}
        className={`border-x border-b border-[#555f6a] pl-[6px] pr-[6px] pb-[6px] ${idle}`}
        titleClass={`-mx-[6px] h-[19px] pl-[7px] pr-[7px] pb-px ${idleBar}`}
      />
      <ChartWindow
        d={h1}
        className={`border-r border-b border-[#555f6a] pl-[6px] pr-[5px] pb-[6px] ${idle}`}
        titleClass={`-mr-[5px] -ml-[6px] h-[19px] pl-[7px] pr-[7px] pb-px ${idleBar}`}
      />
      <ChartWindow
        d={h4}
        className={`rounded-t-[5px] border-t border-r border-l-2 border-[#1c1f24] pl-[6px] pr-[5px] pb-[3px] ${idle}`}
        titleClass={`-mr-[5px] -ml-[6px] h-[25px] rounded-t-[4px] pl-[7px] pr-[7px] pt-[3px] ${idleBar}`}
      >
        <TrendTable />
      </ChartWindow>
      <ChartWindow
        d={d1}
        className={`rounded-t-[5px] border-t border-r border-l-2 border-[#1c1f24] pl-[6px] pr-[5px] pb-[3px] ${idle}`}
        titleClass={`-mr-[5px] -ml-[6px] h-[25px] rounded-t-[4px] pl-[7px] pr-[7px] pt-[3px] ${idleBar}`}
      />
    </main>
  );
}
